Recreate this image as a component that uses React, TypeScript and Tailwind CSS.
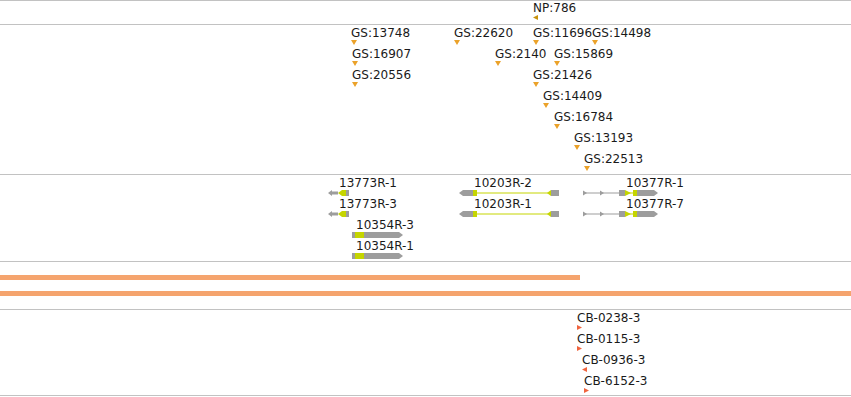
import React from 'react'

type Marker = { label: string; x: number; row: number; dir: 'down' | 'left' | 'right' }

const npFeatures: Marker[] = [{ label: 'NP:786', x: 533, row: 0, dir: 'left' }]

const gsFeatures: Marker[] = [
  { label: 'GS:13748', x: 351, row: 0, dir: 'down' },
  { label: 'GS:22620', x: 454, row: 0, dir: 'down' },
  { label: 'GS:11696', x: 533, row: 0, dir: 'down' },
  { label: 'GS:14498', x: 592, row: 0, dir: 'down' },
  { label: 'GS:16907', x: 352, row: 1, dir: 'down' },
  { label: 'GS:2140', x: 495, row: 1, dir: 'down' },
  { label: 'GS:15869', x: 554, row: 1, dir: 'down' },
  { label: 'GS:20556', x: 352, row: 2, dir: 'down' },
  { label: 'GS:21426', x: 533, row: 2, dir: 'down' },
  { label: 'GS:14409', x: 543, row: 3, dir: 'down' },
  { label: 'GS:16784', x: 554, row: 4, dir: 'down' },
  { label: 'GS:13193', x: 574, row: 5, dir: 'down' },
  { label: 'GS:22513', x: 584, row: 6, dir: 'down' },
]

const cbFeatures: Marker[] = [
  { label: 'CB-0238-3', x: 577, row: 0, dir: 'right' },
  { label: 'CB-0115-3', x: 577, row: 1, dir: 'right' },
  { label: 'CB-0936-3', x: 582, row: 2, dir: 'left' },
  { label: 'CB-6152-3', x: 584, row: 3, dir: 'right' },
]

const geneLabels = [
  { label: '13773R-1', x: 339, row: 0 },
  { label: '13773R-3', x: 339, row: 1 },
  { label: '10354R-3', x: 356, row: 2 },
  { label: '10354R-1', x: 356, row: 3 },
  { label: '10203R-2', x: 474, row: 0 },
  { label: '10203R-1', x: 474, row: 1 },
  { label: '10377R-1', x: 626, row: 0 },
  { label: '10377R-7', x: 626, row: 1 },
]

const GREY = '#9d9d9d'
const YEL = '#c5d500'

function Tri({ dir, color }: { dir: Marker['dir']; color: string }) {
  const pts = dir === 'down' ? '0,0 6,0 3,5' : dir === 'left' ? '0,2.5 5,0 5,5' : '0,0 5,2.5 0,5'
  return (
    <svg width={6} height={5} className="block">
      <polygon points={pts} fill={color} />
    </svg>
  )
}

function MarkerTrack({ items, color, top = 1 }: { items: Marker[]; color: string; top?: number }) {
  return (
    <>
      {items.map((f) => (
        <div key={f.label} className="absolute" style={{ left: f.x, top: top + f.row * 21 }}>
          <div className="whitespace-nowrap">{f.label}</div>
          <Tri dir={f.dir} color={color} />
        </div>
      ))}
    </>
  )
}

// gene glyphs, drawn in track coordinates
function Genes() {
  const H = 6
  const rowTop = (r: number) => 15 + r * 21
  const g13773 = (r: number) => {
    const t = rowTop(r), b = t + H, c = t + H / 2
    return (
      <g key={'a' + r}>
        <polygon points={`328,${c} 332,${t} 332,${c - 1.5} 338,${c - 1.5} 338,${c + 1.5} 332,${c + 1.5} 332,${b}`} fill={GREY} />
        <polygon points={`338,${c} 342,${t} 346,${t} 346,${b} 342,${b}`} fill={YEL} />
        <rect x={346} y={t} width={3} height={H} fill={GREY} />
      </g>
    )
  }
  const g10354 = (r: number) => {
    const t = rowTop(r), b = t + H, c = t + H / 2
    return (
      <g key={'b' + r}>
        <rect x={352} y={t} width={3} height={H} fill={GREY} />
        <rect x={355} y={t} width={9} height={H} fill={YEL} />
        <polygon points={`364,${t} 399,${t} 403,${c} 399,${b} 364,${b}`} fill={GREY} />
      </g>
    )
  }
  const g10203 = (r: number) => {
    const t = rowTop(r), b = t + H, c = t + H / 2
    return (
      <g key={'c' + r}>
        <polygon points={`459,${c} 463,${t} 473,${t} 473,${b} 463,${b}`} fill={GREY} />
        <rect x={473} y={t} width={4} height={H} fill={YEL} />
        <line x1={477} y1={c} x2={548} y2={c} stroke={YEL} strokeWidth={1} />
        <polygon points={`547,${c} 551,${t} 551,${b}`} fill={YEL} />
        <rect x={551} y={t} width={8} height={H} fill={GREY} />
      </g>
    )
  }
  const g10377 = (r: number) => {
    const t = rowTop(r), b = t + H, c = t + H / 2
    return (
      <g key={'d' + r}>
        <line x1={583} y1={c} x2={619} y2={c} stroke={GREY} strokeWidth={1} />
        <polygon points={`583,${t + 0.5} 587,${c} 583,${b - 0.5}`} fill={GREY} />
        <polygon points={`600,${t + 0.5} 604,${c} 600,${b - 0.5}`} fill={GREY} />
        <rect x={619} y={t} width={6} height={H} fill={GREY} />
        <line x1={625} y1={c} x2={633} y2={c} stroke={YEL} strokeWidth={1} />
        <polygon points={`625,${t} 631,${c} 625,${b}`} fill={YEL} />
        <rect x={633} y={t} width={4} height={H} fill={YEL} />
        <polygon points={`637,${t} 654,${t} 658,${c} 654,${b} 637,${b}`} fill={GREY} />
      </g>
    )
  }
  return (
    <svg width={851} height={86} className="absolute left-0 top-0">
      {[0, 1].map(g13773)}
      {[2, 3].map(g10354)}
      {[0, 1].map(g10203)}
      {[0, 1].map(g10377)}
    </svg>
  )
}

export default function App() {
  return (
    <div className="w-[851px] h-[397px] bg-white overflow-hidden text-[12px] leading-[14px] text-[#1a1a1a] font-['DejaVu_Sans',sans-serif]">
      <div className="border-t border-[#c2c2c2]" />

      {/* NP track */}
      <div className="relative h-[24px] border-b border-[#c2c2c2]">
        <MarkerTrack items={npFeatures} color="#c8920c" top={0} />
      </div>

      {/* GS track */}
      <div className="relative h-[150px] border-b border-[#c2c2c2]">
        <MarkerTrack items={gsFeatures} color="#eba22a" />
      </div>

      {/* gene models */}
      <div className="relative h-[87px] border-b border-[#c2c2c2]">
        <Genes />
        {geneLabels.map((g) => (
          <div key={g.label} className="absolute whitespace-nowrap" style={{ left: g.x, top: 1 + g.row * 21 }}>
            {g.label}
          </div>
        ))}
      </div>

      {/* coverage bars */}
      <div className="h-[48px] pt-[13px] border-b border-[#c2c2c2]">
        <div className="h-[5px] w-[580px] bg-[#f5a46e]" />
        <div className="h-[5px] w-full mt-[11px] bg-[#f5a46e]" />
      </div>

      {/* CB track */}
      <div className="relative h-[86px] border-b border-[#c2c2c2]">
        <MarkerTrack items={cbFeatures} color="#f0643e" />
      </div>
    </div>
  )
}
